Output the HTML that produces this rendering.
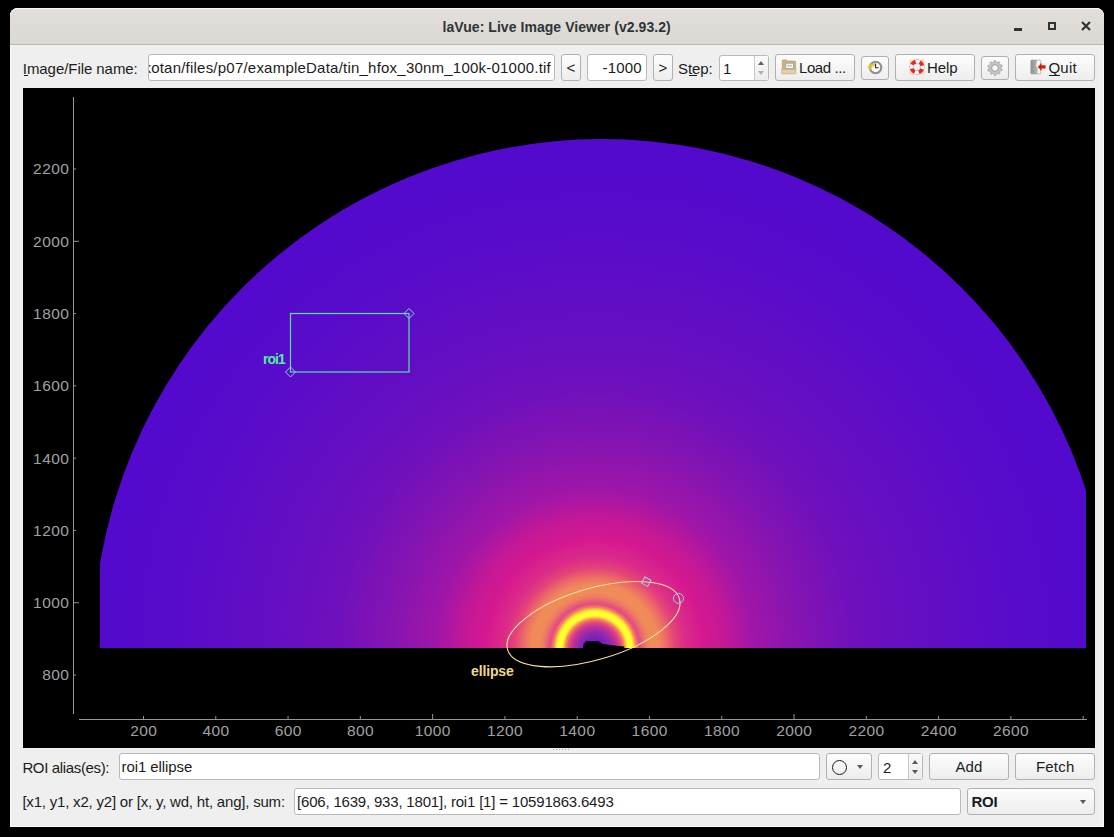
<!DOCTYPE html>
<html><head><meta charset="utf-8"><title>laVue</title><style>
html,body{margin:0;padding:0;width:1114px;height:837px;overflow:hidden;background:#000}
body{position:relative;font-family:"Liberation Sans", sans-serif}
.t{position:absolute;white-space:pre;font-family:"Liberation Sans", sans-serif}
#win{position:absolute;left:10px;top:8px;width:1094px;height:819px;background:#efefef;border-radius:8px 8px 0 0;box-shadow:inset 0 0 0 1px #fafafa}
#titlebar{position:absolute;left:10px;top:8px;width:1094px;height:37px;border-radius:8px 8px 0 0;background:linear-gradient(#e2dfdb,#dcd9d5);border-top:1px solid #f6f5f4;box-sizing:border-box;border-bottom:1px solid #bfb8b1}
.field{position:absolute;box-sizing:border-box;background:#fff;border:1px solid #b9b9b9;border-radius:3px}
.btn{position:absolute;box-sizing:border-box;background:linear-gradient(#fdfdfd,#ededed);border:1px solid #b0b0b0;border-radius:3px}
.arr{position:absolute;width:0;height:0;border-left:5px solid transparent;border-right:5px solid transparent}
.arr.up{border-bottom:5px solid #555}
.arr.dn{border-top:5px solid #555}
</style></head>
<body>
<div id="win"></div>
<div id="titlebar"></div>
<div class="t" style="left:442.60px;top:19.35px;font-size:14px;line-height:16px;color:#2e3436;font-weight:bold;letter-spacing:0.05px;">laVue: Live Image Viewer (v2.93.2)</div>
<div style="position:absolute;left:1014px;top:28px;width:8px;height:2.5px;background:#2e3436"></div>
<div style="position:absolute;left:1048px;top:22px;width:4px;height:4px;border:2px solid #2e3436"></div>
<svg style="position:absolute;left:1080px;top:20px" width="12" height="12" viewBox="0 0 12 12"><path d="M2 2 L10 10 M10 2 L2 10" stroke="#2e3436" stroke-width="2.2" stroke-linecap="butt"/></svg>
<div class="t" style="left:22.80px;top:60.30px;font-size:15px;line-height:17px;color:#1c1c1c;letter-spacing:-0.06px;">Image/File name:</div>
<div style="position:absolute;left:23.5px;top:75px;width:4px;height:1px;background:#1c1c1c"></div>
<div class="field" style="left:148px;top:54px;width:407px;height:27px;"></div>
<div class="t" style="left:149px;top:54px;width:402px;height:27px;overflow:hidden;direction:rtl;text-align:left;font-size:15px;line-height:27px;color:#1c1c1c;letter-spacing:0.22px"><span style="direction:ltr;unicode-bidi:bidi-override">/home/jkotan/files/p07/exampleData/tin_hfox_30nm_100k-01000.tif</span></div>
<div class="btn" style="left:561px;top:54px;width:20px;height:27px;"></div>
<div class="t" style="left:571.00px;transform:translateX(-50%);top:59.30px;font-size:15px;line-height:17px;color:#1c1c1c;letter-spacing:0px;">&lt;</div>
<div class="field" style="left:587px;top:54px;width:60px;height:27px;"></div>
<div class="t" style="right:472.20px;top:59.00px;font-size:15px;line-height:17px;color:#1c1c1c;letter-spacing:0.2px;">-1000</div>
<div class="btn" style="left:653px;top:54px;width:20px;height:27px;"></div>
<div class="t" style="left:663.00px;transform:translateX(-50%);top:59.30px;font-size:15px;line-height:17px;color:#1c1c1c;letter-spacing:0px;">&gt;</div>
<div class="t" style="left:678.00px;top:60.30px;font-size:15px;line-height:17px;color:#1c1c1c;letter-spacing:-0.12px;">Step:</div>
<div style="position:absolute;left:689px;top:75px;width:8px;height:1px;background:#1c1c1c"></div>
<div class="field" style="left:719px;top:55px;width:50px;height:26px;"></div>
<div style="position:absolute;left:754px;top:56px;width:1px;height:24px;background:#c8c8c8"></div>
<div style="position:absolute;left:755px;top:56px;width:13px;height:24px;background:linear-gradient(#fafafa,#ececec)"></div>
<div class="t" style="left:723.00px;top:60.30px;font-size:15px;line-height:17px;color:#1c1c1c;letter-spacing:0px;">1</div>
<div class="arr up" style="left:757.5px;top:61px;border-left-width:3.5px;border-right-width:3.5px;border-bottom:4px solid #606060"></div>
<div class="arr dn" style="left:757.5px;top:71px;border-left-width:3.5px;border-right-width:3.5px;border-top:4px solid #b0b0b0"></div>
<div class="btn" style="left:775px;top:54px;width:80px;height:27px;"></div>
<svg style="position:absolute;left:781px;top:59px" width="16" height="16" viewBox="0 0 16 16"><path d="M1.3 1.5 Q1.3 0.9 1.9 0.9 H5.6 L6.8 2.1 H14 Q14.6 2.1 14.6 2.7 V11 H1.3 Z" fill="#cbb482" stroke="#b59c6c" stroke-width="0.7"/><rect x="4.8" y="4.2" width="7.6" height="5.4" fill="#fafafa" stroke="#9c9c9c" stroke-width="0.8"/><rect x="6" y="5.9" width="5.2" height="1.6" fill="#c4c4c4"/><path d="M0.7 10.3 H14.9 V14.3 Q14.9 14.9 14.3 14.9 H1.3 Q0.7 14.9 0.7 14.3 Z" fill="#e4d0a8" stroke="#c6ae80" stroke-width="0.7"/></svg>
<div class="t" style="left:799.00px;top:59.10px;font-size:15px;line-height:17px;color:#1c1c1c;letter-spacing:-0.42px;">Load ...</div>
<div class="btn" style="left:861px;top:56px;width:28px;height:24px;"></div>
<svg style="position:absolute;left:867px;top:59px" width="16" height="16" viewBox="0 0 16 16"><circle cx="8.6" cy="8.5" r="5.7" fill="#fbfbfb" stroke="#8e8e8e" stroke-width="2.1"/><path d="M8.6 4.4 V8.7 H11.6" stroke="#2a2a2a" stroke-width="1.1" fill="none"/><path d="M0.8 8.3 L4.6 4.2 L5.2 6.2 L8 3.6 L6.9 7.4 L5.5 6.8 L3.4 11 Z" fill="#e8c818" stroke="#c8a810" stroke-width="0.4"/></svg>
<div class="btn" style="left:895px;top:54px;width:80px;height:27px;"></div>
<svg style="position:absolute;left:909px;top:59px" width="16" height="16" viewBox="0 0 16 16"><circle cx="2.8" cy="2.8" r="2.6" fill="#f6dcb0"/><circle cx="13.2" cy="2.8" r="2.6" fill="#f6dcb0"/><circle cx="2.8" cy="13.2" r="2.6" fill="#f6dcb0"/><circle cx="13.2" cy="13.2" r="2.6" fill="#f6dcb0"/><circle cx="8" cy="8" r="5.4" fill="none" stroke="#e02828" stroke-width="4.2"/><circle cx="8" cy="8" r="5.4" fill="none" stroke="#f4f4f4" stroke-width="4.2" stroke-dasharray="4.2 4.28" stroke-dashoffset="2.1"/><circle cx="8" cy="8" r="7.5" fill="none" stroke="#b8b8b8" stroke-width="0.5" opacity="0.6"/><circle cx="8" cy="8" r="3.3" fill="#f2f2f2" stroke="#b8b8b8" stroke-width="0.5"/></svg>
<div class="t" style="left:927.00px;top:59.10px;font-size:15px;line-height:17px;color:#1c1c1c;letter-spacing:-0.1px;">Help</div>
<div class="btn" style="left:981px;top:56px;width:28px;height:24px;"></div>
<svg style="position:absolute;left:987px;top:60px" width="16" height="16" viewBox="0 0 16 16"><path d="M13.90 8.00 L13.86 8.67 L15.29 9.30 L14.85 10.81 L13.31 10.58 L12.77 11.47 L12.77 11.47 L12.35 11.98 L13.13 13.33 L11.89 14.30 L10.78 13.21 L9.82 13.61 L9.82 13.61 L9.18 13.78 L9.02 15.33 L7.44 15.38 L7.19 13.84 L6.18 13.61 L6.18 13.61 L5.56 13.37 L4.52 14.53 L3.21 13.64 L3.91 12.25 L3.23 11.47 L3.23 11.47 L2.87 10.91 L1.34 11.23 L0.81 9.75 L2.19 9.03 L2.10 8.00 L2.10 8.00 L2.14 7.33 L0.71 6.70 L1.15 5.19 L2.69 5.42 L3.23 4.53 L3.23 4.53 L3.65 4.02 L2.87 2.67 L4.11 1.70 L5.22 2.79 L6.18 2.39 L6.18 2.39 L6.82 2.22 L6.98 0.67 L8.56 0.62 L8.81 2.16 L9.82 2.39 L9.82 2.39 L10.44 2.63 L11.48 1.47 L12.79 2.36 L12.09 3.75 L12.77 4.53 L12.77 4.53 L13.13 5.09 L14.66 4.77 L15.19 6.25 L13.81 6.97 L13.90 8.00 Z" fill="#c6c6c6" stroke="#a4a4a4" stroke-width="0.8"/><circle cx="8" cy="8" r="3.4" fill="#f6f6f6" stroke="#9a9a9a" stroke-width="1"/></svg>
<div class="btn" style="left:1015px;top:54px;width:80px;height:27px;"></div>
<svg style="position:absolute;left:1030px;top:59px" width="16" height="16" viewBox="0 0 16 16"><defs><linearGradient id="dg" x1="0" x2="1"><stop offset="0" stop-color="#8c8c8c"/><stop offset="0.6" stop-color="#b4b4b4"/><stop offset="1" stop-color="#d8d8d8"/></linearGradient></defs><rect x="0.8" y="1.1" width="9.8" height="13.8" rx="0.8" fill="url(#dg)" stroke="#9a9a9a" stroke-width="0.6"/><path d="M7 1.6 H10.1 V14.4 H7.5 L7.8 9 L6.2 7 Z" fill="#f8f8f8"/><path d="M8 7.9 L11.3 4.4 V6.6 H15.3 V9.2 H11.3 V11.4 Z" fill="#dd1a08" stroke="#c01000" stroke-width="0.4"/></svg>
<div class="t" style="left:1048.50px;top:59.10px;font-size:15px;line-height:17px;color:#1c1c1c;letter-spacing:0.2px;">Quit</div>
<div style="position:absolute;left:1048.5px;top:75px;width:11px;height:1px;background:#1c1c1c"></div>
<div style="position:absolute;left:552.5px;top:749px;width:1px;height:1px;background:#a8a8a8"></div>
<div style="position:absolute;left:555.5px;top:749px;width:1px;height:1px;background:#a8a8a8"></div>
<div style="position:absolute;left:558.5px;top:749px;width:1px;height:1px;background:#a8a8a8"></div>
<div style="position:absolute;left:561.5px;top:749px;width:1px;height:1px;background:#a8a8a8"></div>
<div style="position:absolute;left:564.5px;top:749px;width:1px;height:1px;background:#a8a8a8"></div>
<div style="position:absolute;left:567.5px;top:749px;width:1px;height:1px;background:#a8a8a8"></div>
<div class="t" style="left:22.40px;top:758.60px;font-size:15px;line-height:17px;color:#1c1c1c;letter-spacing:-0.35px;">ROI alias(es):</div>
<div class="field" style="left:119px;top:753px;width:701px;height:27px;"></div>
<div class="t" style="left:121.50px;top:758.10px;font-size:15px;line-height:17px;color:#1c1c1c;letter-spacing:-0.08px;">roi1 ellipse</div>
<div class="btn" style="left:826px;top:753px;width:46px;height:27px;"></div>
<div style="position:absolute;left:832px;top:760px;width:13px;height:13px;border:1.3px solid #1c1c1c;border-radius:50%"></div>
<div class="arr dn" style="left:857px;top:764.5px;border-left-width:3.5px;border-right-width:3.5px;border-top:4px solid #5a5a5a"></div>
<div class="field" style="left:878px;top:753px;width:45px;height:27px;"></div>
<div style="position:absolute;left:908px;top:754px;width:1px;height:25px;background:#c8c8c8"></div>
<div style="position:absolute;left:909px;top:754px;width:13px;height:25px;background:linear-gradient(#fafafa,#ececec)"></div>
<div class="t" style="left:883.00px;top:759.30px;font-size:15px;line-height:17px;color:#1c1c1c;letter-spacing:0px;">2</div>
<div class="arr up" style="left:911.5px;top:760px;border-left-width:3.5px;border-right-width:3.5px;border-bottom:4px solid #5a5a5a"></div>
<div class="arr dn" style="left:911.5px;top:770px;border-left-width:3.5px;border-right-width:3.5px;border-top:4px solid #5a5a5a"></div>
<div class="btn" style="left:929px;top:753px;width:80px;height:27px;"></div>
<div class="t" style="left:969.00px;transform:translateX(-50%);top:758.30px;font-size:15px;line-height:17px;color:#1c1c1c;letter-spacing:0.1px;">Add</div>
<div class="btn" style="left:1015px;top:753px;width:80px;height:27px;"></div>
<div class="t" style="left:1055.20px;transform:translateX(-50%);top:758.30px;font-size:15px;line-height:17px;color:#1c1c1c;letter-spacing:0.2px;">Fetch</div>
<div class="t" style="left:22.40px;top:792.90px;font-size:15px;line-height:17px;color:#1c1c1c;letter-spacing:-0.2px;">[x1, y1, x2, y2] or [x, y, wd, ht, ang], sum:</div>
<div class="field" style="left:294px;top:788px;width:667px;height:27px;"></div>
<div class="t" style="left:297.00px;top:792.70px;font-size:15px;line-height:17px;color:#1c1c1c;letter-spacing:-0.19px;">[606, 1639, 933, 1801], roi1 [1] = 10591863.6493</div>
<div class="btn" style="left:967px;top:788px;width:128px;height:27px;"></div>
<div class="t" style="left:971.50px;top:792.90px;font-size:15px;line-height:17px;color:#1c1c1c;font-weight:bold;letter-spacing:-0.25px;">ROI</div>
<div class="arr dn" style="left:1079.5px;top:799.5px;border-left-width:3.5px;border-right-width:3.5px;border-top:4px solid #5a5a5a"></div>
<svg id="plot" width="1114" height="837" viewBox="0 0 1114 837" style="position:absolute;left:0;top:0">
<defs>
<radialGradient id="rg" gradientUnits="userSpaceOnUse" cx="594.8" cy="648.5" r="560">
<stop offset="0.0000" stop-color="#6818c0"/>
<stop offset="0.0179" stop-color="#7420b8"/>
<stop offset="0.0286" stop-color="#9028b0"/>
<stop offset="0.0393" stop-color="#c03098"/>
<stop offset="0.0464" stop-color="#e04880"/>
<stop offset="0.0527" stop-color="#f88858"/>
<stop offset="0.0563" stop-color="#ffd838"/>
<stop offset="0.0589" stop-color="#ffff30"/>
<stop offset="0.0661" stop-color="#ffff30"/>
<stop offset="0.0693" stop-color="#ffd838"/>
<stop offset="0.0732" stop-color="#f88858"/>
<stop offset="0.0795" stop-color="#e24a86"/>
<stop offset="0.0839" stop-color="#e65a78"/>
<stop offset="0.0911" stop-color="#ee7a62"/>
<stop offset="0.1000" stop-color="#f08c58"/>
<stop offset="0.1143" stop-color="#f08a5a"/>
<stop offset="0.1286" stop-color="#ec6a68"/>
<stop offset="0.1429" stop-color="#e44478"/>
<stop offset="0.1607" stop-color="#dc2c88"/>
<stop offset="0.1964" stop-color="#d41890"/>
<stop offset="0.2321" stop-color="#c41896"/>
<stop offset="0.2821" stop-color="#a016a8"/>
<stop offset="0.3714" stop-color="#8414b2"/>
<stop offset="0.4607" stop-color="#7010bc"/>
<stop offset="0.5500" stop-color="#660fc2"/>
<stop offset="0.6393" stop-color="#600dc6"/>
<stop offset="0.7500" stop-color="#580bca"/>
<stop offset="0.9286" stop-color="#520ace"/>
<stop offset="1.0000" stop-color="#500ad0"/>
</radialGradient>
<clipPath id="cp"><rect x="100" y="100" width="986" height="548"/></clipPath>
</defs>
<rect x="23" y="88" width="1072" height="660" fill="#000"/>
<g clip-path="url(#cp)"><circle cx="602" cy="648" r="509" fill="url(#rg)"/></g>
<path d="M583 648 L583.5 644 L586 641.2 L598.5 641.2 L603 644 L617 645.7 L624.3 646.5 L624.3 648 Z" fill="#000"/>
<rect x="73" y="97" width="1" height="617" fill="#969696"/>
<rect x="79" y="719" width="1008" height="1" fill="#969696"/>
<rect x="74" y="674.50" width="2" height="1" fill="#969696"/>
<rect x="74" y="602.21" width="5" height="1" fill="#969696"/>
<rect x="74" y="529.93" width="2" height="1" fill="#969696"/>
<rect x="74" y="457.64" width="2" height="1" fill="#969696"/>
<rect x="74" y="385.36" width="2" height="1" fill="#969696"/>
<rect x="74" y="313.07" width="2" height="1" fill="#969696"/>
<rect x="74" y="240.78" width="5" height="1" fill="#969696"/>
<rect x="74" y="168.50" width="2" height="1" fill="#969696"/>
<rect x="143.00" y="716" width="1" height="3" fill="#969696"/>
<rect x="215.28" y="716" width="1" height="3" fill="#969696"/>
<rect x="287.56" y="716" width="1" height="3" fill="#969696"/>
<rect x="359.84" y="716" width="1" height="3" fill="#969696"/>
<rect x="432.12" y="714" width="1" height="5" fill="#969696"/>
<rect x="504.40" y="716" width="1" height="3" fill="#969696"/>
<rect x="576.68" y="716" width="1" height="3" fill="#969696"/>
<rect x="648.96" y="716" width="1" height="3" fill="#969696"/>
<rect x="721.24" y="716" width="1" height="3" fill="#969696"/>
<rect x="793.52" y="714" width="1" height="5" fill="#969696"/>
<rect x="865.80" y="716" width="1" height="3" fill="#969696"/>
<rect x="938.08" y="716" width="1" height="3" fill="#969696"/>
<rect x="1010.36" y="716" width="1" height="3" fill="#969696"/>
<rect x="1082.64" y="716" width="1" height="3" fill="#969696"/>
</svg>
<div class="t" style="right:1045.20px;top:666.43px;font-size:15.5px;line-height:18px;color:#a0a0a0;letter-spacing:0.4px;margin-right:-0.4px">800</div>
<div class="t" style="right:1045.20px;top:594.14px;font-size:15.5px;line-height:18px;color:#a0a0a0;letter-spacing:0.4px;margin-right:-0.4px">1000</div>
<div class="t" style="right:1045.20px;top:521.86px;font-size:15.5px;line-height:18px;color:#a0a0a0;letter-spacing:0.4px;margin-right:-0.4px">1200</div>
<div class="t" style="right:1045.20px;top:449.57px;font-size:15.5px;line-height:18px;color:#a0a0a0;letter-spacing:0.4px;margin-right:-0.4px">1400</div>
<div class="t" style="right:1045.20px;top:377.29px;font-size:15.5px;line-height:18px;color:#a0a0a0;letter-spacing:0.4px;margin-right:-0.4px">1600</div>
<div class="t" style="right:1045.20px;top:305.00px;font-size:15.5px;line-height:18px;color:#a0a0a0;letter-spacing:0.4px;margin-right:-0.4px">1800</div>
<div class="t" style="right:1045.20px;top:232.71px;font-size:15.5px;line-height:18px;color:#a0a0a0;letter-spacing:0.4px;margin-right:-0.4px">2000</div>
<div class="t" style="right:1045.20px;top:160.43px;font-size:15.5px;line-height:18px;color:#a0a0a0;letter-spacing:0.4px;margin-right:-0.4px">2200</div>
<div class="t" style="left:143.70px;transform:translateX(-50%);top:721.83px;font-size:15.5px;line-height:18px;color:#a0a0a0;letter-spacing:0.4px;">200</div>
<div class="t" style="left:215.98px;transform:translateX(-50%);top:721.83px;font-size:15.5px;line-height:18px;color:#a0a0a0;letter-spacing:0.4px;">400</div>
<div class="t" style="left:288.26px;transform:translateX(-50%);top:721.83px;font-size:15.5px;line-height:18px;color:#a0a0a0;letter-spacing:0.4px;">600</div>
<div class="t" style="left:360.54px;transform:translateX(-50%);top:721.83px;font-size:15.5px;line-height:18px;color:#a0a0a0;letter-spacing:0.4px;">800</div>
<div class="t" style="left:432.82px;transform:translateX(-50%);top:721.83px;font-size:15.5px;line-height:18px;color:#a0a0a0;letter-spacing:0.4px;">1000</div>
<div class="t" style="left:505.10px;transform:translateX(-50%);top:721.83px;font-size:15.5px;line-height:18px;color:#a0a0a0;letter-spacing:0.4px;">1200</div>
<div class="t" style="left:577.38px;transform:translateX(-50%);top:721.83px;font-size:15.5px;line-height:18px;color:#a0a0a0;letter-spacing:0.4px;">1400</div>
<div class="t" style="left:649.66px;transform:translateX(-50%);top:721.83px;font-size:15.5px;line-height:18px;color:#a0a0a0;letter-spacing:0.4px;">1600</div>
<div class="t" style="left:721.94px;transform:translateX(-50%);top:721.83px;font-size:15.5px;line-height:18px;color:#a0a0a0;letter-spacing:0.4px;">1800</div>
<div class="t" style="left:794.22px;transform:translateX(-50%);top:721.83px;font-size:15.5px;line-height:18px;color:#a0a0a0;letter-spacing:0.4px;">2000</div>
<div class="t" style="left:866.50px;transform:translateX(-50%);top:721.83px;font-size:15.5px;line-height:18px;color:#a0a0a0;letter-spacing:0.4px;">2200</div>
<div class="t" style="left:938.78px;transform:translateX(-50%);top:721.83px;font-size:15.5px;line-height:18px;color:#a0a0a0;letter-spacing:0.4px;">2400</div>
<div class="t" style="left:1011.06px;transform:translateX(-50%);top:721.83px;font-size:15.5px;line-height:18px;color:#a0a0a0;letter-spacing:0.4px;">2600</div>
<svg width="1114" height="837" style="position:absolute;left:0;top:0">
<rect x="290.5" y="313.5" width="118.5" height="58.5" fill="none" stroke="#4ee8a0" stroke-width="1.2"/>
<path d="M290.5 367 L295.5 372 L290.5 377 L285.5 372 Z" fill="none" stroke="#94c4f0" stroke-width="1"/>
<path d="M409 308.5 L414 313.5 L409 318.5 L404 313.5 Z" fill="none" stroke="#94c4f0" stroke-width="1"/>
<ellipse cx="593.5" cy="624.2" rx="89.6" ry="35.6" transform="rotate(-16.5 593.5 624.2)" fill="none" stroke="#f4e0a0" stroke-width="1.1"/>
<rect x="-3.5" y="-3.5" width="7" height="7" transform="translate(646.3 581.7) rotate(28)" fill="none" stroke="#96d0f0" stroke-width="1"/>
<circle cx="678.5" cy="598.4" r="5" fill="none" stroke="#96d0f0" stroke-width="1"/>
</svg>
<div class="t" style="left:262.90px;top:351.15px;font-size:14px;line-height:16px;color:#50eea0;font-weight:bold;letter-spacing:-0.9px;">roi1</div>
<div class="t" style="left:471.10px;top:663.15px;font-size:14px;line-height:16px;color:#f0d890;font-weight:bold;letter-spacing:-0.15px;">ellipse</div>
</body></html>
